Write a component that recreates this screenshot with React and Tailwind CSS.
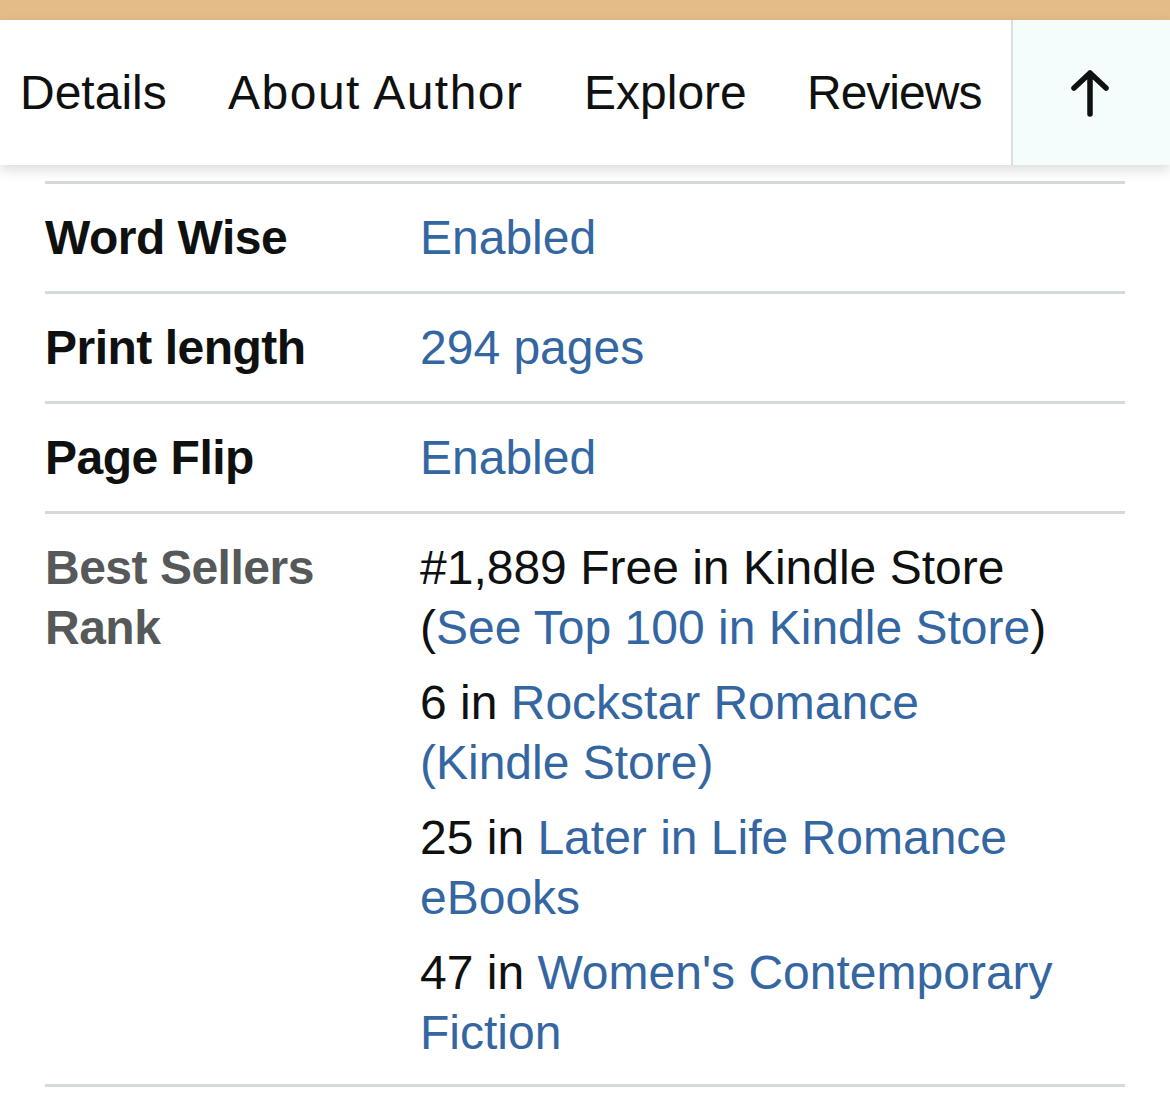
import React from "react";

const font = { fontFamily: '"Liberation Sans", Arial, sans-serif' };

const tabs = [
  { label: "Details", w: "w-[146px]" },
  { label: "About Author", w: "w-[294px] tracking-[1.5px]" },
  { label: "Explore", w: "w-[161px]" },
  { label: "Reviews", w: "w-[172px] tracking-[-1px]" },
];

function Link({ children }) {
  return <a className="text-[#3466a2]">{children}</a>;
}

function Row({ label, children }) {
  return (
    <div className="flex border-b-[3px] border-[#d5d9d9] pt-[24px] pb-[23px]">
      <div className="w-[375px] shrink-0 font-bold tracking-[-0.5px] text-[#0f1111]">{label}</div>
      <div className="flex-1">{children}</div>
    </div>
  );
}

export default function App() {
  return (
    <div className="w-[1170px] h-[1096px] bg-white overflow-hidden text-[48px] leading-[60px]" style={font}>
      <div className="h-[20px] bg-[#e4bc88]" />
      <div className="relative z-10 flex h-[145px] bg-white shadow-[0_5px_12px_rgba(0,0,0,0.14)]">
        <div className="flex flex-1 items-center gap-[62px] pl-[20px] text-[#0f1111]">
          {tabs.map((t) => (
            <span key={t.label} className={`${t.w} shrink-0 whitespace-nowrap`}>
              {t.label}
            </span>
          ))}
        </div>
        <div className="flex w-[159px] items-center justify-center border-l-2 border-[#dcdede] bg-[#f4fdfb]">
          <svg width="44" height="50" viewBox="0 0 44 50" fill="none" className="-ml-[4px]">
            <path
              d="M22 46V5M6 20L22 5L38 20"
              stroke="#0f1111"
              strokeWidth="5.5"
              strokeLinecap="round"
              strokeLinejoin="round"
            />
          </svg>
        </div>
      </div>
      <div className="mx-[45px] mt-[16px] border-t-[3px] border-[#d5d9d9]">
        <Row label="Word Wise">
          <Link>Enabled</Link>
        </Row>
        <Row label="Print length">
          <Link>294 pages</Link>
        </Row>
        <Row label="Page Flip">
          <Link>Enabled</Link>
        </Row>
        <div className="flex border-b-[3px] border-[#d5d9d9] pt-[24px] pb-[21px]">
          <div className="w-[375px] shrink-0 font-bold tracking-[-0.5px] text-[#565959]">
            Best Sellers
            <br />
            Rank
          </div>
          <div className="flex flex-1 flex-col gap-[15px] text-[#0f1111]">
            <div>
              #1,889 Free in Kindle Store
              <br />
              (<Link>See Top 100 in Kindle Store</Link>)
            </div>
            <div>
              6 in <Link>Rockstar Romance</Link>
              <br />
              <Link>(Kindle Store)</Link>
            </div>
            <div>
              25 in <Link>Later in Life Romance</Link>
              <br />
              <Link>eBooks</Link>
            </div>
            <div>
              47 in <Link>Women's Contemporary</Link>
              <br />
              <Link>Fiction</Link>
            </div>
          </div>
        </div>
      </div>
    </div>
  );
}
